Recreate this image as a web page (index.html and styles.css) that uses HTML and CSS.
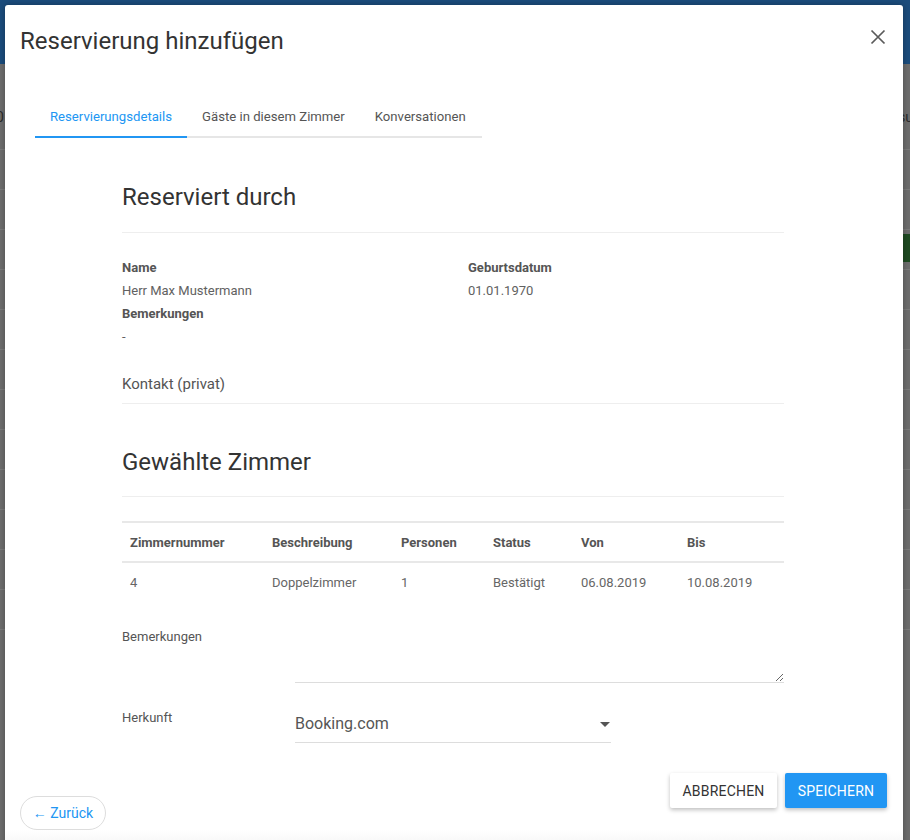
FILE: index.html
```html
<!DOCTYPE html>
<html lang="de">
<head>
<meta charset="utf-8">
<title>Reservierung hinzufügen</title>
<link rel="stylesheet" href="styles.css">
</head>
<body>
<div class="app">
  <div class="app-header"></div>
  <div class="app-toolbar"><span class="tb-left">0</span><span class="tb-right">su</span></div>
  <div class="app-row"></div>
  <div class="app-row"></div>
  <div class="app-row"><span class="green"></span></div>
  <div class="app-row"></div>
  <div class="app-row"></div>
  <div class="app-row"></div>
  <div class="app-row"></div>
  <div class="app-row"></div>
  <div class="app-row"></div>
  <div class="app-row"></div>
  <div class="app-row"></div>
  <div class="app-row"></div>
</div>

<div class="dialog">
  <div class="dialog-head">
    <h1 class="dialog-title">Reservierung hinzufügen</h1>
    <button class="close" aria-label="Schließen">
      <svg width="18" height="18" viewBox="0 0 18 18"><path d="M2.5 2.5 L15.5 15.5 M15.5 2.5 L2.5 15.5" stroke="#5a5a5a" stroke-width="1.7" fill="none"/></svg>
    </button>
  </div>

  <nav class="tabs">
    <span class="tab active">Reservierungsdetails</span>
    <span class="tab">Gäste in diesem Zimmer</span>
    <span class="tab">Konversationen</span>
  </nav>

  <main class="content">
    <h2 class="section-title">Reserviert durch</h2>
    <div class="details">
      <div class="col">
        <div class="lbl">Name</div>
        <div class="val">Herr Max Mustermann</div>
        <div class="lbl">Bemerkungen</div>
        <div class="val">-</div>
      </div>
      <div class="col">
        <div class="lbl">Geburtsdatum</div>
        <div class="val">01.01.1970</div>
      </div>
    </div>
    <h3 class="sub-title">Kontakt (privat)</h3>

    <h2 class="section-title second">Gewählte Zimmer</h2>
    <table class="rooms">
      <thead>
        <tr><th class="c1">Zimmernummer</th><th class="c2">Beschreibung</th><th class="c3">Personen</th><th class="c4">Status</th><th class="c5">Von</th><th>Bis</th></tr>
      </thead>
      <tbody>
        <tr><td>4</td><td>Doppelzimmer</td><td>1</td><td>Bestätigt</td><td>06.08.2019</td><td>10.08.2019</td></tr>
      </tbody>
    </table>

    <div class="form-row first">
      <label class="form-label">Bemerkungen</label>
      <textarea class="textarea"></textarea>
    </div>
    <div class="form-row">
      <label class="form-label">Herkunft</label>
      <div class="select">
        <span>Booking.com</span>
        <svg width="10" height="5" viewBox="0 0 10 5"><path d="M0 0 L10 0 L5 5 Z" fill="#555"/></svg>
      </div>
    </div>
  </main>

  <div class="footer">
    <button class="back">← Zurück</button>
    <div class="actions">
      <button class="btn btn-cancel">ABBRECHEN</button>
      <button class="btn btn-save">SPEICHERN</button>
    </div>
  </div>
</div>
</body>
</html>
```
FILE: styles.css
```css
* { box-sizing: border-box; }
html, body { margin: 0; padding: 0; }
body {
  width: 910px;
  height: 840px;
  overflow: hidden;
  background: #6d6d6d;
  font-family: Roboto, "Liberation Sans", sans-serif;
  position: relative;
}

/* dimmed application behind the modal */
.app { width: 910px; }
.app-header { height: 64px; background: #1b4c7c; }
.app-toolbar {
  height: 86px;
  display: flex;
  justify-content: space-between;
  align-items: center;
  padding-top: 20px;
  color: #2a2a2a;
  font-size: 14px;
  border-bottom: 1px solid #7b7b7b;
}
.tb-left { margin-left: -4px; }
.tb-right { margin-right: -3px; }
.app-row {
  height: 40px;
  border-bottom: 1px solid #7b7b7b;
  position: relative;
}
.green {
  position: absolute;
  right: 0;
  top: 4px;
  width: 10px;
  height: 28px;
  background: #1f4a22;
}

/* modal */
.dialog {
  position: absolute;
  left: 5px;
  top: 5px;
  width: 898px;
  height: 840px;
  background: linear-gradient(#fff 825px, #f6f6f6 840px);
  border-radius: 3px 3px 0 0;
  box-shadow: 0 0 6px rgba(0,0,0,.3);
  display: flex;
  flex-direction: column;
}
.dialog-head {
  display: flex;
  justify-content: space-between;
  align-items: flex-start;
  padding: 20px 16px 0 15px;
}
.dialog-title {
  margin: 0;
  font-size: 24px;
  line-height: 32px;
  font-weight: 400;
  color: #333;
}
.close {
  border: 0;
  background: none;
  padding: 0;
  margin: 3px 0 0 0;
  width: 18px;
  height: 18px;
  cursor: pointer;
}

.tabs {
  margin: 38px 0 0 30px;
  width: 447px;
  display: flex;
  border-bottom: 2px solid #e6e6e6;
  font-size: 13.15px;
  color: #555;
}
.tab {
  flex: none;
  white-space: nowrap;
  padding: 14px 15px 11px 15px;
  line-height: 16px;
  margin-bottom: -2px;
  border-bottom: 2px solid transparent;
}
.tab.active {
  color: #2196f3;
  border-bottom-color: #2196f3;
}

.content {
  margin: 0 119px 0 117px;
  color: #616161;
  font-size: 13px;
}
.section-title {
  margin: 43px 0 0 0;
  font-size: 24px;
  line-height: 32px;
  font-weight: 400;
  color: #333;
  padding-bottom: 19px;
  border-bottom: 1px solid #eee;
}
.section-title.second {
  margin-top: 42px;
  padding-bottom: 18px;
}
.details {
  display: grid;
  grid-template-columns: 346px 1fr;
  margin-top: 23px;
  line-height: 23px;
}
.lbl { font-weight: 700; color: #555; font-size: 13px; }
.val { color: #616161; font-size: 13px; }
.sub-title {
  margin: 26px 0 0 0;
  font-size: 15px;
  line-height: 20px;
  font-weight: 400;
  color: #555;
  padding-bottom: 9px;
  border-bottom: 1px solid #eee;
}

.rooms {
  margin-top: 24px;
  width: 100%;
  border-collapse: collapse;
  font-size: 13px;
}
.rooms th {
  text-align: left;
  font-weight: 700;
  color: #555;
  font-size: 13px;
  height: 40px;
  padding: 0 8px;
  border-top: 2px solid #e8e8e8;
  border-bottom: 2px solid #e8e8e8;
}
.rooms td {
  height: 40px;
  padding: 0 8px;
  color: #666;
}
.rooms .c1 { width: 142px; }
.rooms .c2 { width: 129px; }
.rooms .c3 { width: 92px; }
.rooms .c4 { width: 88px; }
.rooms .c5 { width: 106px; }

.form-row {
  display: grid;
  grid-template-columns: 173px 1fr;
  align-items: start;
  font-size: 13px;
}
.form-row.first { margin-top: 25px; }
.form-row + .form-row { margin-top: 25px; }
.form-label {
  color: #555;
  line-height: 20px;
}
.textarea {
  display: block;
  width: 100%;
  height: 56px;
  border: 0;
  border-bottom: 1px solid #ddd;
  resize: vertical;
  font: inherit;
  outline: none;
  padding: 0;
  margin: 0;
}
.select {
  width: 316px;
  display: flex;
  justify-content: space-between;
  align-items: center;
  font-size: 16px;
  color: #555;
  line-height: 20px;
  padding: 6px 0 8px 0;
  border-bottom: 1px solid #ddd;
}
.select svg { margin-right: 1px; }

.footer {
  margin: 30px 16px 0 15px;
  height: 57px;
  display: flex;
  justify-content: space-between;
}
.back {
  align-self: flex-end;
  height: 34px;
  width: 86px;
  padding: 0;
  border: 1px solid #ddd;
  border-radius: 17px;
  background: #fff;
  color: #2196f3;
  font: 14px Roboto, "Liberation Sans", sans-serif;
}
.actions { display: flex; gap: 8px; align-items: flex-start; }
.btn {
  height: 35px;
  border: 0;
  border-radius: 2px;
  font: 14px Roboto, "Liberation Sans", sans-serif;
  letter-spacing: 0.2px;
  box-shadow: 0 2px 4px rgba(0,0,0,.25);
}
.btn-cancel { width: 107px; background: #fff; color: #333; }
.btn-save { width: 102px; background: #2196f3; color: #fff; }
```
